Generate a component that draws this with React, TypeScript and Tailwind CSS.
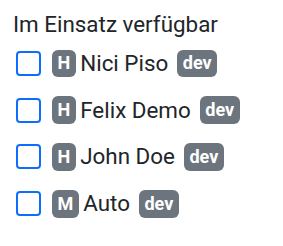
import React from 'react';

type Person = { role: string; name: string; tag: string };

const PEOPLE: Person[] = [
  { role: 'H', name: 'Nici Piso', tag: 'dev' },
  { role: 'H', name: 'Felix Demo', tag: 'dev' },
  { role: 'H', name: 'John Doe', tag: 'dev' },
  { role: 'M', name: 'Auto', tag: 'dev' },
];

function Badge({ children }: { children: React.ReactNode }) {
  return (
    <span className="inline-flex h-[27.5px] items-center rounded-[6px] bg-[#6c757d] px-[5.5px] text-[18px] font-bold leading-none text-white">
      {children}
    </span>
  );
}

export default function App() {
  return (
    <div
      className="min-h-[246px] w-[283px] bg-white px-[13px] pt-2 text-[#212529]"
      style={{ fontFamily: 'Roboto, "Noto Sans", sans-serif' }}
    >
      <h5 className="text-[22.4px] font-normal leading-[33px]">Im Einsatz verfügbar</h5>
      <div className="-mt-[1px] flex flex-col">
        {PEOPLE.map((p, i) => (
          <label key={i} className="flex h-[46.8px] items-center">
            <span className="ml-[3px] box-border h-[25px] w-[25px] shrink-0 rounded-[4px] border-2 border-[#0d6efd] bg-white" />
            <span className="ml-[11px] flex">
              <Badge>{p.role}</Badge>
            </span>
            <span className="ml-[4.5px] text-[22.4px] leading-[33px]">{p.name}</span>
            <span className="ml-[9px] flex">
              <Badge>{p.tag}</Badge>
            </span>
          </label>
        ))}
      </div>
    </div>
  );
}
